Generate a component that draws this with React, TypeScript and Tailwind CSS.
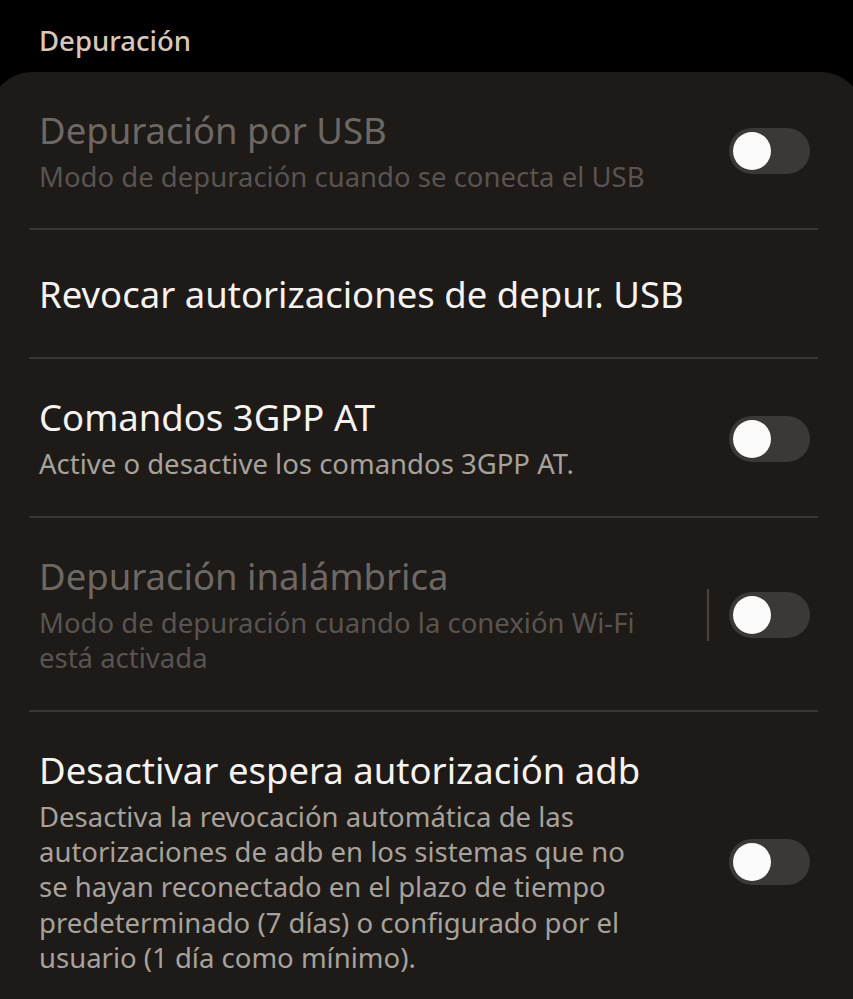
import React from "react";

type Row = {
  title: string;
  sub?: string;
  disabled?: boolean;
  toggle?: boolean;
  divider?: boolean; // vertical bar before the switch
};

const rows: Row[] = [
  {
    title: "Depuración por USB",
    sub: "Modo de depuración cuando se conecta el USB",
    disabled: true,
    toggle: true,
  },
  { title: "Revocar autorizaciones de depur. USB" },
  {
    title: "Comandos 3GPP AT",
    sub: "Active o desactive los comandos 3GPP AT.",
    toggle: true,
  },
  {
    title: "Depuración inalámbrica",
    sub: "Modo de depuración cuando la conexión Wi-Fi está activada",
    disabled: true,
    toggle: true,
    divider: true,
  },
  {
    title: "Desactivar espera autorización adb",
    sub: "Desactiva la revocación automática de las autorizaciones de adb en los sistemas que no se hayan reconectado en el plazo de tiempo predeterminado (7 días) o configurado por el usuario (1 día como mínimo).",
    toggle: true,
  },
];

function Switch() {
  return (
    <div className="w-[81px] h-[46px] rounded-full bg-[#3b3836] flex items-center pl-[4px] shrink-0">
      <div className="w-[38px] h-[38px] rounded-full bg-[#fbfbfb]" />
    </div>
  );
}

export default function App() {
  return (
    <div
      className="w-[853px] h-[999px] bg-black overflow-hidden"
      style={{ fontFamily: '"Noto Sans", "Open Sans", sans-serif' }}
    >
      {/* Section label */}
      <div className="h-[72px] pl-[39px] pt-[23px] text-[27.5px] leading-[36px] font-medium text-[#d8c7ba]">
        Depuración
      </div>

      {/* Card, a bit wider than the screen so the sides are cut off */}
      <div className="-mx-[10px] px-[10px] rounded-t-[42px] bg-[#1e1a17] min-h-[927px]">
        {rows.map((r, i) => (
          <div key={i}>
            {i > 0 && <div className="ml-[29px] mr-[35px] h-[2px] bg-[#393532]" />}
            <div
              className={
                r.sub
                  ? "flex items-center pl-[39px] pr-[43px] pt-[36px] pb-[34px]"
                  : "flex items-center pl-[39px] pr-[43px] h-[127px]"
              }
            >
              <div className="w-[620px] shrink-0">
                <div
                  className={
                    "text-[36.5px] leading-[44px] whitespace-nowrap " +
                    (r.disabled ? "text-[#6d6864]" : "text-[#f5f3f1]")
                  }
                >
                  {r.title}
                </div>
                {r.sub && (
                  <div
                    className={
                      "mt-[7px] text-[27.5px] leading-[35.4px] " +
                      (r.disabled ? "text-[#595451]" : "text-[#a7a29d]")
                    }
                  >
                    {r.sub}
                  </div>
                )}
              </div>
              <div className="ml-auto flex items-center">
                {r.divider && <div className="w-[2px] h-[52px] bg-[#48433f] mr-[20px]" />}
                {r.toggle && <Switch />}
              </div>
            </div>
          </div>
        ))}
      </div>
    </div>
  );
}
